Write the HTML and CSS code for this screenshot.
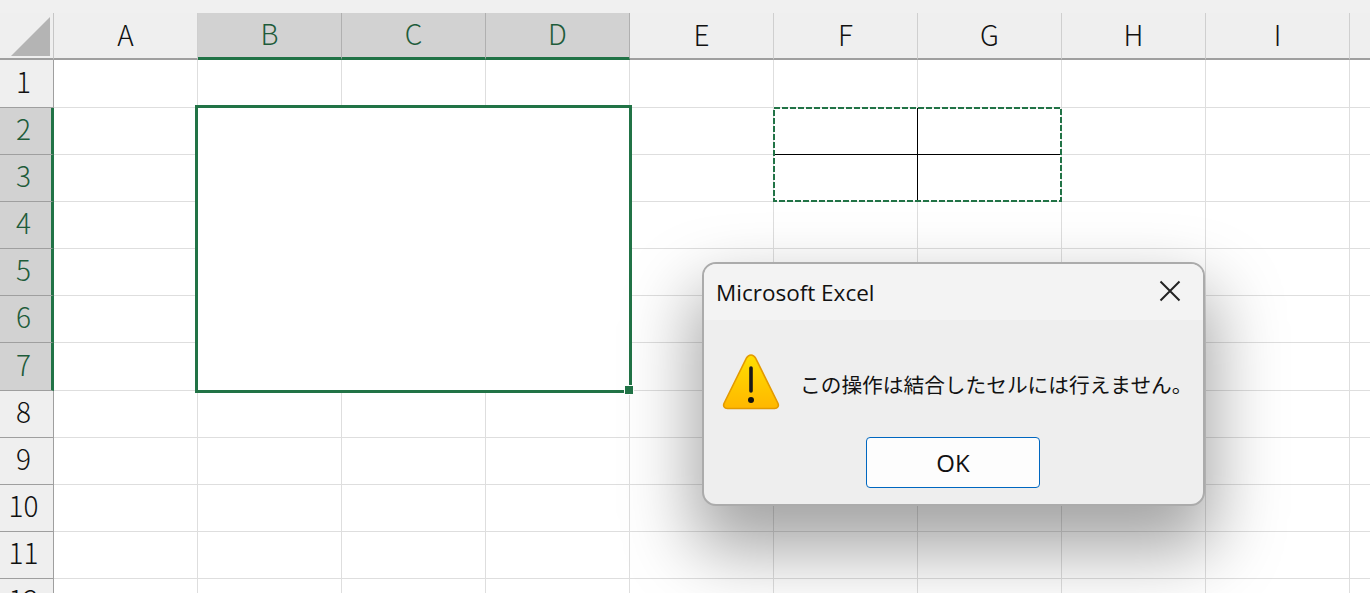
FILE: index.html
```html
<!DOCTYPE html>
<html lang="ja">
<head>
<meta charset="utf-8">
<title>Microsoft Excel</title>
<link rel="stylesheet" href="styles.css">
</head>
<body>
<div class="sheet">
  <div class="strip"></div>
  <div class="row head">
    <div class="corner"><svg width="53" height="46" viewBox="0 0 53 46"><polygon points="11,43 50,4 50,43" fill="#b4b4b4"/></svg></div>
    <div class="ch">A</div><div class="ch sel">B</div><div class="ch sel">C</div><div class="ch sel">D</div><div class="ch">E</div><div class="ch">F</div><div class="ch">G</div><div class="ch">H</div><div class="ch">I</div><div class="ch end"></div>
  </div>
  <div class="row tall"><div class="rh">1</div><i></i><i></i><i></i><i></i><i></i><i></i><i></i><i></i><i></i><i></i></div>
  <div class="row"><div class="rh sel">2</div><i></i><i></i><i></i><i></i><i></i><i></i><i></i><i></i><i></i><i></i></div>
  <div class="row"><div class="rh sel">3</div><i></i><i></i><i></i><i></i><i></i><i></i><i></i><i></i><i></i><i></i></div>
  <div class="row"><div class="rh sel">4</div><i></i><i></i><i></i><i></i><i></i><i></i><i></i><i></i><i></i><i></i></div>
  <div class="row"><div class="rh sel">5</div><i></i><i></i><i></i><i></i><i></i><i></i><i></i><i></i><i></i><i></i></div>
  <div class="row"><div class="rh sel">6</div><i></i><i></i><i></i><i></i><i></i><i></i><i></i><i></i><i></i><i></i></div>
  <div class="row tall"><div class="rh sel">7</div><i></i><i></i><i></i><i></i><i></i><i></i><i></i><i></i><i></i><i></i></div>
  <div class="row"><div class="rh">8</div><i></i><i></i><i></i><i></i><i></i><i></i><i></i><i></i><i></i><i></i></div>
  <div class="row"><div class="rh">9</div><i></i><i></i><i></i><i></i><i></i><i></i><i></i><i></i><i></i><i></i></div>
  <div class="row"><div class="rh">10</div><i></i><i></i><i></i><i></i><i></i><i></i><i></i><i></i><i></i><i></i></div>
  <div class="row"><div class="rh">11</div><i></i><i></i><i></i><i></i><i></i><i></i><i></i><i></i><i></i><i></i></div>
  <div class="row"><div class="rh">12</div><i></i><i></i><i></i><i></i><i></i><i></i><i></i><i></i><i></i><i></i></div>

  <div class="selection"><span class="handle"></span></div>

  <svg class="copied" width="289" height="95" viewBox="0 0 289 95">
    <path d="M144.5 1V94M1 47.5H288" stroke="#000" stroke-width="1" fill="none"/>
    <rect x="1" y="1" width="287" height="93" fill="none" stroke="#217346" stroke-width="2" stroke-dasharray="6 2"/>
  </svg>

  <div class="dialog">
    <div class="title">
      <span class="title-text">Microsoft Excel</span>
      <svg class="close" width="22" height="22" viewBox="0 0 22 22"><path d="M1.5 1.5L20.5 20.5M20.5 1.5L1.5 20.5" stroke="#222" stroke-width="2" fill="none"/></svg>
    </div>
    <div class="body">
      <div class="message">
        <svg class="warn" width="58" height="58" viewBox="0 0 58 58">
          <defs><linearGradient id="warnFill" x1="0" y1="0" x2="0" y2="1"><stop offset="0" stop-color="#ffdf00"/><stop offset="1" stop-color="#ffb700"/></linearGradient></defs>
          <path d="M29 2C31 2 32.5 3.2 33.6 5.2L55.8 50C57.3 53 55.6 55.5 52.6 55.5H5.4C2.4 55.5 .7 53 2.2 50L24.4 5.2C25.5 3.2 27 2 29 2Z" fill="url(#warnFill)" stroke="#e39a00" stroke-width="1.6"/>
          <path d="M29 15V38" stroke="#1a1a1a" stroke-width="3.6" stroke-linecap="round" fill="none"/>
          <circle cx="29" cy="47" r="3" fill="#111"/>
        </svg>
        <span class="msg-text">この操作は結合したセルには行えません。</span>
      </div>
      <div class="actions"><button class="ok">OK</button></div>
    </div>
  </div>
</div>
</body>
</html>
```
FILE: styles.css
```css
* { box-sizing: border-box; }
html, body { margin: 0; height: 100%; overflow: hidden; background: #fff; }
.sheet {
  position: relative;
  width: 1370px;
  height: 593px;
  overflow: hidden;
  font-family: "Noto Sans CJK JP", "Noto Sans", sans-serif;
  color: #111;
}
.strip { height: 13px; background: #f0f0f0; }
.row { display: flex; height: 47px; }
.row.tall { height: 48px; }
.row i {
  display: block;
  width: 144px;
  flex: none;
  border-right: 1px solid #dedede;
  border-bottom: 1px solid #dedede;
}
.corner {
  width: 54px;
  flex: none;
  background: #efefef;
  border-right: 1px solid #c6c6c6;
  border-bottom: 2px solid #9f9f9f;
}
.corner svg { display: block; }
.ch {
  width: 144px;
  flex: none;
  display: flex;
  align-items: center;
  justify-content: center;
  font-size: 28px;
  font-weight: 300;
  line-height: 1;
  padding-bottom: 4px;
  background: #efefef;
  border-right: 1px solid #cfcfcf;
  border-bottom: 2px solid #9f9f9f;
}
.ch.sel {
  background: #d2d2d2;
  color: #1e5c3a;
  border-right-color: #b0b0b0;
  border-bottom: 3px solid #217346;
}
.ch.end { flex: 1; width: auto; border-right: 0; }
.rh {
  width: 54px;
  flex: none;
  display: flex;
  align-items: center;
  justify-content: center;
  font-size: 28px;
  font-weight: 300;
  line-height: 1;
  padding-right: 6px;
  padding-bottom: 6px;
  background: #efefef;
  border-right: 1px solid #9f9f9f;
  border-bottom: 1px solid #9f9f9f;
}
.rh.sel {
  background: #d2d2d2;
  color: #1e5c3a;
  border-right: 3px solid #217346;
  padding-right: 4px;
}
.selection {
  position: absolute;
  left: 195px;
  top: 105px;
  width: 437px;
  height: 288px;
  background: #fff;
  border: 3px solid #217346;
}
.handle {
  position: absolute;
  right: -5px;
  bottom: -5px;
  width: 10px;
  height: 10px;
  background: #217346;
  border: 1px solid #fff;
}
.copied { position: absolute; left: 773px; top: 107px; display: block; }
.dialog {
  position: absolute;
  left: 702px;
  top: 262px;
  width: 503px;
  height: 244px;
  display: flex;
  flex-direction: column;
  border: 2px solid #ababab;
  border-radius: 14px;
  background: #eeeeee;
  box-shadow: 0 36px 70px 8px rgba(0, 0, 0, .36);
}
.title {
  height: 56px;
  flex: none;
  display: flex;
  align-items: center;
  justify-content: space-between;
  padding: 0 22px 0 12px;
  background: #f3f3f3;
  border-radius: 12px 12px 0 0;
}
.title-text { font-family: "Open Sans", "Noto Sans", sans-serif; font-size: 22.5px; color: #111; }
.close { display: block; margin-top: -2px; }
.body { flex: 1; display: flex; flex-direction: column; }
.message {
  height: 117px;
  display: flex;
  align-items: center;
  gap: 20px;
  padding-left: 18px;
  padding-top: 6px;
  flex: none;
}
.warn { display: block; flex: none; }
.msg-text { font-size: 20.7px; font-weight: 400; color: #111; white-space: nowrap; padding-top: 4px; }
.actions { display: flex; justify-content: flex-end; padding-right: 163px; }
.ok {
  width: 174px;
  height: 51px;
  border: 1px solid #0067c0;
  border-radius: 4px;
  background: #fdfdfd;
  font-family: "Open Sans", "Noto Sans", sans-serif;
  font-size: 24px;
  color: #111;
  padding: 0;
}
```
